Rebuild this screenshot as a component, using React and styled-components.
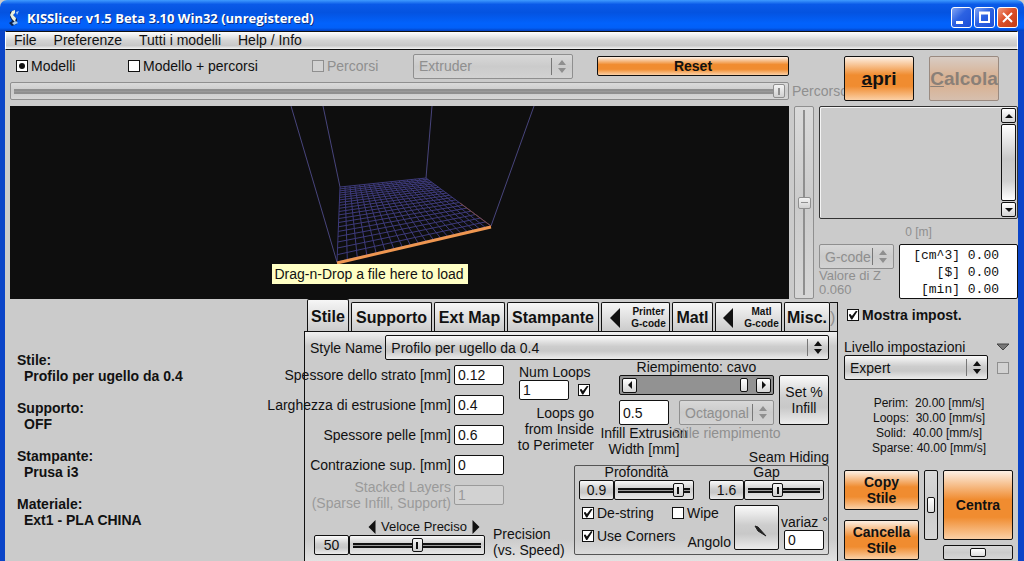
import React, { useState } from "react";
import styled, { createGlobalStyle, css } from "styled-components";

const GlobalStyle = createGlobalStyle`
  *, *::before, *::after {
    box-sizing: border-box;
  }
  body {
    margin: 0;
    background: #cbcbcb;
    color: #111;
    font-family: "Liberation Sans", Arial, sans-serif;
    font-size: 14px;
    line-height: 16px;
  }
  button, input, select {
    margin: 0;
    font-family: inherit;
    color: inherit;
  }
  h1, p, dl, dd, fieldset {
    margin: 0;
    padding: 0;
  }
`;

const gloss = "linear-gradient(#fafafa, #cdcdcd 45%, #c8c8c8 65%, #ececec)";
const orange = "linear-gradient(#fdf0e4, #f08c30 42%, #f08c30 68%, #fbd0a6)";

const Window = styled.div`
  min-height: 100vh;
  display: flex;
  flex-direction: column;
  overflow: hidden;
  background: #cbcbcb;
`;

const TitleBar = styled.header`
  height: 31px;
  display: flex;
  align-items: center;
  gap: 5px;
  padding: 4px 6px 0 7px;
  border-radius: 7px 7px 0 0;
  color: #fff;
  background: linear-gradient(#3f9bff, #0a5ae8 14%, #0453e0 40%, #0262fc 75%, #0260f8 90%, #0340c0);
`;

const Title = styled.h1`
  flex: 1;
  font: bold 13px/18px "Open Sans", "Noto Sans", sans-serif;
  text-shadow: 1px 1px 0 #0a2f86;
`;

const WindowButtons = styled.div`
  display: flex;
  gap: 2px;
`;

const WindowButton = styled.button`
  width: 21px;
  height: 21px;
  padding: 0;
  border: 1px solid #fff;
  border-radius: 3px;
  background: ${(p) =>
    p.$close
      ? "linear-gradient(135deg, #f09a80, #dc4f28 45%, #c23c14)"
      : "linear-gradient(135deg, #83a6f5, #2c62e2 45%, #1c4fd8)"};

  svg {
    display: block;
    margin: auto;
  }
`;

const Frame = styled.div`
  flex: 1;
  display: flex;
  flex-direction: column;
  border: solid #0a44c8;
  border-width: 0 6px 0 5px;
`;

const MenuBar = styled.nav`
  height: 19px;
  display: flex;
  gap: 17px;
  padding: 0 8px;
  border: 1px solid #111;
  border-right-color: #fff;
  border-left-color: #fff;
  background: linear-gradient(#fff, #d4d4d4 50%, #c8c8c8 80%, #f4f4f4);
`;

const MenuItem = styled.button`
  padding: 0;
  border: 0;
  background: none;
  font-size: 14px;
  line-height: 17px;
`;

const TopGrid = styled.section`
  display: grid;
  grid-template-columns: minmax(0, 1fr) 55px 174px;
  grid-template-rows: 32px 18px;
  padding-bottom: 6px;
`;

const Toolbar = styled.div`
  display: grid;
  grid-template-columns: 112px 184px 101px 160px 1fr;
  align-items: center;
  padding-left: 11px;
`;

const CheckLabel = styled.label`
  display: inline-flex;
  align-items: center;
  gap: 3px;
  white-space: nowrap;
  color: ${(p) => (p.$disabled ? "#8f8f8f" : "inherit")};
  font-weight: ${(p) => (p.$bold ? "bold" : "normal")};
`;

const Box = styled.input`
  appearance: none;
  flex: none;
  width: 12px;
  height: 12px;
  display: grid;
  place-items: center;
  border: 1px solid #111;
  background: #fff;

  &:disabled {
    border-color: #8f8f8f;
    background: #d2d2d2;
  }
  &:checked::before {
    content: "";
    background: #111;
    ${(p) =>
      p.type === "radio"
        ? css`
            width: 6px;
            height: 6px;
            border-radius: 3px;
          `
        : css`
            width: 9px;
            height: 9px;
            clip-path: polygon(0 45%, 22% 40%, 38% 62%, 85% 0, 100% 8%, 42% 100%, 30% 100%);
          `}
  }
`;

const SelectWrap = styled.div`
  position: relative;
  width: ${(p) => p.$width || "100%"};
  height: 25px;
  color: ${(p) => (p.$disabled ? "#8f8f8f" : "#111")};

  svg {
    position: absolute;
    right: 7px;
    top: 6px;
    pointer-events: none;
  }
  &::after {
    content: "";
    position: absolute;
    right: 21px;
    top: 4px;
    bottom: 4px;
    border-left: 1px solid #777;
  }
`;

const SelectField = styled.select`
  appearance: none;
  display: block;
  width: 100%;
  height: 100%;
  padding: 0 22px 0 5px;
  border: 1px solid currentColor;
  border-radius: 2px;
  background: ${gloss};
  font-size: 14px;
  opacity: 1;

  &:disabled {
    background: linear-gradient(#d8d8d8, #cbcbcb 50%, #d2d2d2);
  }
`;

const OrangeButton = styled.button`
  width: ${(p) => p.$width || "auto"};
  height: ${(p) => p.$height};
  padding: 0;
  border: 1px solid #111;
  border-radius: 2px;
  background: ${orange};
  font-size: ${(p) => p.$size || "14px"};
  font-weight: bold;
  line-height: 16px;
  white-space: nowrap;

  &:disabled {
    border-color: #9a8a80;
    color: #8a8078;
    background: linear-gradient(#d8ccc4, #d8b294 45%, #d8b294 65%, #d6bfae);
  }
`;

const ResetButton = styled(OrangeButton)`
  margin-left: 24px;
`;

const MainButtons = styled.div`
  grid-row: 1 / 3;
  grid-column: 3;
  display: flex;
  gap: 15px;
  padding-top: 6px;
`;

const PathLabel = styled.label`
  grid-row: 2;
  grid-column: 2;
  padding-left: 3px;
  white-space: nowrap;
  line-height: 18px;
  color: #8f8f8f;
`;

const thumb = css`
  appearance: none;
  box-sizing: border-box;
  width: ${(p) => p.$thumbW || 11}px;
  height: ${(p) => p.$thumbH || 14}px;
  border: 1px solid ${(p) => (p.disabled ? "#8f8f8f" : "#111")};
  border-radius: 2px;
  background: ${(p) =>
    p.$plain
      ? "linear-gradient(#fff, #ddd)"
      : `linear-gradient(currentColor, currentColor) center / ${
          p.$vertical ? "7px 1px" : "2px 7px"
        } no-repeat, linear-gradient(#f4f4f4, #d0d0d0)`};
`;

const Slider = styled.input`
  appearance: none;
  display: block;
  width: 100%;
  min-width: 0;
  height: 20px;
  padding: 0 3px;
  border: 1px solid currentColor;
  border-radius: 2px;
  color: ${(p) => (p.disabled ? "#8f8f8f" : "#111")};
  background: ${(p) =>
    p.$plain || p.disabled
      ? "linear-gradient(#dadada, #cbcbcb 50%, #d6d6d6)"
      : "linear-gradient(#f8f8f8, #cdcdcd 45%, #e6e6e6)"};

  ${(p) =>
    p.$vertical &&
    css`
      writing-mode: vertical-lr;
      direction: rtl;
      width: ${p.$width || "20px"};
      height: ${p.$height || "auto"};
      padding: 3px 0;
    `}

  &::-webkit-slider-runnable-track {
    ${(p) => (p.$vertical ? `width: ${p.$thumbW || 11}px;` : `height: ${p.$thumbH || 14}px;`)}
    background: ${(p) => {
      if (p.$plain) return "none";
      if (p.$vertical) return "linear-gradient(#8f8f8f, #8f8f8f) center / 2px 100% no-repeat";
      return "linear-gradient(currentColor 0 2px, #999 2px 3px, currentColor 3px 5px) center / 100% 5px no-repeat";
    }};
  }
  &::-webkit-slider-thumb {
    ${thumb}
  }
`;

const PathSlider = styled(Slider)`
  grid-row: 2;
  grid-column: 1;
  width: auto;
  height: 18px;
  margin-left: 5px;
`;

const ViewRow = styled.section`
  display: flex;
  height: 193px;
  padding-left: 5px;
`;

const Viewport = styled.div`
  position: relative;
  flex: 1;
  min-width: 0;
  overflow: hidden;
  background: #0e0e0e;

  svg {
    display: block;
    width: 100%;
    height: 193px;
  }
`;

const Hint = styled.div`
  position: absolute;
  top: 158px;
  left: calc(50% - 128px);
  height: 20px;
  padding: 0 4px 0 3px;
  line-height: 20px;
  white-space: nowrap;
  background: #ffffc4;
`;

const ZSliderBox = styled.div`
  display: flex;
  padding: 0 5px;
`;

const SidePanel = styled.div`
  width: 199px;
  display: flex;
  flex-direction: column;
`;

const Log = styled.div`
  height: 113px;
  display: flex;
  justify-content: flex-end;
  padding: 1px;
  border: 1px solid #333;
  border-radius: 2px;
  box-shadow: inset 1px 1px 0 #f4f4f4;
`;

const ScrollBar = styled.div`
  width: 15px;
  display: flex;
  flex-direction: column;
  gap: 1px;
`;

const ArrowButton = styled.button`
  flex: none;
  width: 15px;
  height: 15px;
  padding: 0;
  border: 1px solid #111;
  border-radius: 2px;
  background: linear-gradient(#fff, #d4d4d4);

  svg {
    display: block;
    margin: auto;
  }
`;

const ScrollThumb = styled.div`
  flex: 1;
  border: 1px solid #111;
  border-radius: 2px;
  background: linear-gradient(#fff, #c8c8c8 45%, #d0d0d0 75%, #fff);
`;

const Length = styled.p`
  padding-top: 4px;
  line-height: 18px;
  font-size: 12px;
  text-align: center;
  color: #8f8f8f;
`;

const SideBottom = styled.div`
  display: flex;
  justify-content: space-between;
  padding-top: 3px;
`;

const ZValue = styled.p`
  font-size: 13px;
  line-height: 14px;
  color: #8f8f8f;
  white-space: nowrap;
`;

const Estimate = styled.pre`
  width: 119px;
  height: 55px;
  margin: 0;
  padding: 2px 18px 0 0;
  border: 1px solid #111;
  border-radius: 2px;
  background: #fff;
  font: 13px/17px "Liberation Mono", monospace;
  text-align: right;
`;

const Lower = styled.main`
  flex: 1;
  display: flex;
`;

const Summary = styled.dl`
  flex: 1;
  min-width: 0;
  padding: 53px 0 0 12px;
  font-weight: bold;
`;

const SummaryItem = styled.div`
  margin-bottom: 16px;

  dd {
    padding-left: 7px;
  }
`;

const Notebook = styled.section`
  width: 534px;
  display: flex;
  flex-direction: column;
`;

const Tabs = styled.div`
  height: 32px;
  display: flex;
  align-items: flex-end;
  gap: 2px;
  padding-left: 3px;
`;

const Tab = styled.button`
  width: ${(p) => p.$width};
  height: ${(p) => (p.$active ? "32px" : "29px")};
  flex: none;
  display: flex;
  align-items: center;
  justify-content: center;
  gap: 6px;
  padding: 2px 0 0;
  border: 1px solid #111;
  border-bottom: 0;
  border-radius: 2px 2px 0 0;
  background: linear-gradient(#f6f6f6, #cbcbcb);
  font-size: ${(p) => (p.$small ? "10px" : "16px")};
  font-weight: bold;
  line-height: 12px;
  text-align: center;
  white-space: nowrap;
`;

const TabRest = styled.span`
  flex: 1;
  height: 29px;
  margin-left: -2px;
  border: solid #111;
  border-width: 1px 1px 0 0;
  line-height: 30px;
  font-size: 16px;
  color: #8f8f8f;
`;

const Panel = styled.div`
  flex: 1;
  padding: 3px 8px 5px 5px;
  border: solid #111;
  border-width: 1px 1px 0 1px;
  background: linear-gradient(#f0f0f0, #cbcbcb 14px, #cbcbcb calc(100% - 24px), #e4e4e4);
`;

const StyleRow = styled.div`
  display: flex;
  align-items: center;
  gap: 3px;
  white-space: nowrap;
`;

const PanelBody = styled.div`
  display: flex;
  gap: 13px;
  padding-top: 5px;
`;

const Fields = styled.div`
  width: 194px;
  display: flex;
  flex-direction: column;
  gap: 10px;
`;

// labels longer than the column run out to the left
const Field = styled.div`
  height: 20px;
  display: flex;
  align-items: center;
  justify-content: flex-end;
  gap: 3px;
  text-align: right;
  white-space: pre;
  color: ${(p) => (p.$disabled ? "#9a9a9a" : "inherit")};
`;

const TextInput = styled.input`
  flex: none;
  width: ${(p) => p.$width || "50px"};
  height: ${(p) => p.$height || "20px"};
  padding: 0 3px;
  border: 1px solid #111;
  border-radius: 2px;
  background: #fff;
  font-size: 14px;

  &:disabled {
    border-color: #9a9a9a;
    background: #d2d2d2;
  }
`;

const ValueButton = styled.button`
  flex: none;
  width: 35px;
  height: 20px;
  padding: 0;
  border: 1px solid #111;
  border-radius: 2px;
  background: ${gloss};
  font-size: 14px;
`;

const Precision = styled.div`
  width: 260px;
  display: flex;
  gap: 8px;
  padding: 4px 0 0 4px;
`;

const PrecisionControl = styled.div`
  width: 171px;
`;

const PrecisionScale = styled.div`
  display: flex;
  align-items: center;
  justify-content: flex-end;
  gap: 2px;
  padding-right: 2px;
  font-size: 13px;
`;

const PrecisionLabel = styled.label`
  padding-top: 7px;
  white-space: pre;
`;

const SliderRow = styled.div`
  display: flex;
`;

const RightSide = styled.div`
  flex: 1;
  display: flex;
  flex-direction: column;
`;

const InfillRow = styled.div`
  display: flex;
  justify-content: space-between;
`;

const Loops = styled.div`
  width: 77px;
  white-space: pre;
`;

const LoopsRow = styled.div`
  display: flex;
  align-items: center;
  gap: 9px;
  padding-left: 2px;
`;

const LoopsText = styled.p`
  padding-top: 5px;
  text-align: right;
`;

const LoopsLabel = styled.label`
  display: block;
  padding-left: 2px;
  line-height: 15px;
`;

const Infill = styled.div`
  width: 210px;
  display: grid;
  grid-template-columns: 155px 50px;
  column-gap: 5px;
`;

const InfillLabel = styled.label`
  grid-column: 1;
  margin-top: -6px;
  text-align: center;
`;

const InfillBar = styled.div`
  grid-column: 1;
  height: 20px;
  display: flex;
  align-items: center;
  padding: 0 2px;
  border: 1px solid #111;
  border-radius: 2px;
  background: #929292;

  input {
    height: 14px;
    padding: 0 8px 0 0;
    border: 0;
    background: none;
  }
`;

const InfillButton = styled.button`
  grid-column: 2;
  grid-row: 2 / 4;
  height: 50px;
  padding: 0;
  border: 1px solid #111;
  border-radius: 2px;
  background: ${gloss};
  font-size: 14px;
  line-height: 16px;
`;

const InfillInputs = styled.div`
  display: flex;
  justify-content: space-between;
  padding-top: 5px;
`;

const Stack = styled.div`
  width: ${(p) => p.$width};
  display: flex;
  flex-direction: column;
  align-items: center;
  text-align: center;
  white-space: pre;
  color: ${(p) => (p.$disabled ? "#8f8f8f" : "inherit")};
`;

const SeamTitle = styled.p`
  margin-top: -8px;
  text-align: right;
`;

const Seam = styled.div`
  align-self: flex-end;
  width: 255px;
  height: 90px;
  border: 1px solid #555;
  border-radius: 2px;
`;

const SeamSliders = styled.div`
  display: flex;
  justify-content: space-between;
  padding: 0 4px;
  margin-top: -2px;
`;

const SeamSlider = styled.div`
  width: 115px;

  label {
    display: block;
    text-align: center;
  }
`;

const SeamBottom = styled.div`
  display: flex;
  padding: 5px 4px 0 7px;
`;

const SeamChecks = styled.div`
  flex: 1;
  display: grid;
  grid-template-columns: 90px 1fr;
  grid-template-rows: 16px 1fr;
`;

const AngleLabel = styled.span`
  align-self: end;
  padding-right: 3px;
  text-align: right;
`;

const Dial = styled.button`
  width: 45px;
  height: 45px;
  padding: 0;
  border: 1px solid #111;
  border-radius: 2px;
  background: ${gloss};

  svg {
    display: block;
    margin: auto;
  }
`;

const Variation = styled.div`
  width: 45px;
  padding: 9px 0 0 5px;
  white-space: nowrap;

  label {
    display: block;
    margin-left: -3px;
  }
`;

const Settings = styled.aside`
  width: 180px;
  padding: 8px 4px 0 6px;
  display: flex;
  flex-direction: column;
`;

const SettingsCheck = styled(CheckLabel)`
  padding-left: 3px;
`;

const LevelRow = styled.div`
  display: flex;
  align-items: center;
  justify-content: space-between;
  padding-right: 4px;

  &:first-of-type {
    padding-top: 16px;
  }
`;

const LevelBox = styled(Box)`
  margin-right: 1px;
`;

const Speeds = styled.div`
  padding: 16px 0 14px;
  font-size: 12px;
  line-height: 15px;
  text-align: center;
  white-space: pre;
`;

const Actions = styled.div`
  display: grid;
  grid-template-columns: 75px 14px 70px;
  grid-template-rows: 70px 15px;
  gap: 5px;
`;

const ActionStack = styled.div`
  grid-row: 1 / 3;
  display: flex;
  flex-direction: column;
  gap: 10px;
`;

const PanSlider = styled(Slider)`
  grid-column: 3;
  height: 15px;
`;

const Spinner = () => (
  <svg width="8" height="13" viewBox="0 0 8 13" fill="currentColor">
    <path d="M4 0 8 5H0Z M0 8H8L4 13Z" />
  </svg>
);

const arrows = {
  up: "M4 2 8 6H0Z",
  down: "M0 2H8L4 6Z",
  left: "M6 0V8L2 4Z",
  right: "M2 0 6 4 2 8Z",
};

const Arrow = ({ dir, size = 8 }) => (
  <svg width={size} height={size} viewBox="0 0 8 8" fill="currentColor">
    <path d={arrows[dir]} />
  </svg>
);

const Select = ({ id, value, width, disabled, label }) => (
  <SelectWrap $width={width} $disabled={disabled}>
    <SelectField id={id} aria-label={label} defaultValue={value} disabled={disabled}>
      <option>{value}</option>
    </SelectField>
    <Spinner />
  </SelectWrap>
);

// perspective map of the unit square on the bed corners
const front = [327, 156];
const right = [481, 120];
const backRight = [416, 72];
const backLeft = [330, 81];

const project = (u, v) => {
  const [x0, y0] = front;
  const [x1, y1] = right;
  const [x2, y2] = backRight;
  const [x3, y3] = backLeft;
  const dx1 = x1 - x2;
  const dx2 = x3 - x2;
  const dy1 = y1 - y2;
  const dy2 = y3 - y2;
  const sx = x0 - x1 + x2 - x3;
  const sy = y0 - y1 + y2 - y3;
  const det = dx1 * dy2 - dx2 * dy1;
  const g = (sx * dy2 - dx2 * sy) / det;
  const h = (dx1 * sy - sx * dy1) / det;
  const w = g * u + h * v + 1;
  return [
    ((x1 - x0 + g * x1) * u + (x3 - x0 + h * x3) * v + x0) / w,
    ((y1 - y0 + g * y1) * u + (y3 - y0 + h * y3) * v + y0) / w,
  ];
};

const gridPath = Array.from({ length: 21 }, (_, i) => {
  const t = i / 20;
  return `M${project(t, 0)}L${project(t, 1)}M${project(0, t)}L${project(1, t)}`;
}).join("");

const Bed = () => (
  <svg viewBox="0 0 779 193" fill="none">
    <path d={gridPath} stroke="#3d3a7a" strokeWidth="1" />
    <path
      d="M281 0 327 156 M313 0 330 81 M422 0 416 72 M524 0 481 120"
      stroke="#48457c"
      strokeWidth="1"
    />
    <path d="M450 97 481 120" stroke="#7a4a48" strokeWidth="1" />
    <path d="M327 157 481 121" stroke="#ee9650" strokeWidth="3" />
  </svg>
);

const Logo = () => (
  <svg width="15" height="18" viewBox="0 0 15 18">
    <path d="M3 3 8 1 6 6 10 10 10 15 5 17 2 14 5 12 3 8Z" fill="#0b2250" />
    <path d="M5 2 8 1 8 4 6 6 9 9 8 13 5 10 3 6Z" fill="#e8f0dc" />
    <path d="M9 3 12 2 10 6Z M5 14 9 12 11 14 7 16Z" fill="#a9cdf2" />
  </svg>
);

const fields = [
  { id: "strato", label: "Spessore dello strato [mm]", value: "0.12" },
  { id: "estrusione", label: "Larghezza di estrusione [mm]", value: "0.4" },
  { id: "pelle", label: "Spessore pelle [mm]", value: "0.6" },
  { id: "contrazione", label: "Contrazione sup. [mm]", value: "0" },
  { id: "stacked", label: "Stacked Layers\n(Sparse Infill, Support)", value: "1", disabled: true },
];

const summary = [
  ["Stile:", "Profilo per ugello da 0.4"],
  ["Supporto:", "OFF"],
  ["Stampante:", "Prusa i3"],
  ["Materiale:", "Ext1 - PLA CHINA"],
];

const tabs = [
  { name: "Stile", width: "42px" },
  { name: "Supporto", width: "81px" },
  { name: "Ext Map", width: "71px" },
  { name: "Stampante", width: "92px" },
  { name: "Printer", width: "69px", gcode: true },
  { name: "Matl", width: "41px" },
  { name: "Matl", width: "67px", gcode: true },
  { name: "Misc.", width: "46px" },
];

const App = () => {
  const [tab, setTab] = useState(0);
  const [view, setView] = useState("modelli");

  return (
    <Window>
      <GlobalStyle />
      <TitleBar>
        <Logo />
        <Title>KISSlicer v1.5 Beta 3.10 Win32 (unregistered)</Title>
        <WindowButtons>
          <WindowButton aria-label="Minimize">
            <svg width="19" height="19">
              <path d="M4 13H11V16H4Z" fill="#fff" />
            </svg>
          </WindowButton>
          <WindowButton aria-label="Maximize">
            <svg width="19" height="19" fill="none" stroke="#fff">
              <path d="M5 5V14H14V5" strokeWidth="2" />
              <path d="M4 5H15" strokeWidth="3" />
            </svg>
          </WindowButton>
          <WindowButton $close aria-label="Close">
            <svg width="19" height="19" stroke="#fff" strokeWidth="2">
              <path d="M5 5 14 14 M14 5 5 14" />
            </svg>
          </WindowButton>
        </WindowButtons>
      </TitleBar>

      <Frame>
        <MenuBar>
          <MenuItem>File</MenuItem>
          <MenuItem>Preferenze</MenuItem>
          <MenuItem>Tutti i modelli</MenuItem>
          <MenuItem>Help / Info</MenuItem>
        </MenuBar>

        <TopGrid>
          <Toolbar>
            <CheckLabel>
              <Box
                type="radio"
                name="view"
                checked={view === "modelli"}
                onChange={() => setView("modelli")}
              />
              Modelli
            </CheckLabel>
            <CheckLabel>
              <Box
                type="radio"
                name="view"
                checked={view === "entrambi"}
                onChange={() => setView("entrambi")}
              />
              Modello + percorsi
            </CheckLabel>
            <CheckLabel $disabled>
              <Box type="radio" name="view" disabled />
              Percorsi
            </CheckLabel>
            <Select value="Extruder" label="Extruder" disabled />
            <ResetButton $height="20px">Reset</ResetButton>
          </Toolbar>
          <PathSlider id="percorso" type="range" defaultValue={100} $thumbW={12} disabled />
          <PathLabel htmlFor="percorso">Percorso</PathLabel>
          <MainButtons>
            <OrangeButton $width="70px" $height="45px" $size="19px">
              <u>a</u>pri
            </OrangeButton>
            <OrangeButton $width="70px" $height="45px" $size="19px" disabled>
              <u>C</u>alcola
            </OrangeButton>
          </MainButtons>
        </TopGrid>

        <ViewRow>
          <Viewport>
            <Bed />
            <Hint>Drag-n-Drop a file here to load</Hint>
          </Viewport>
          <ZSliderBox>
            <Slider
              type="range"
              aria-label="Z"
              defaultValue={50}
              $vertical
              $thumbW={13}
              $thumbH={12}
              disabled
            />
          </ZSliderBox>
          <SidePanel>
            <Log>
              <ScrollBar>
                <ArrowButton aria-label="Su">
                  <Arrow dir="up" />
                </ArrowButton>
                <ScrollThumb />
                <ArrowButton aria-label="Giù">
                  <Arrow dir="down" />
                </ArrowButton>
              </ScrollBar>
            </Log>
            <Length>0 [m]</Length>
            <SideBottom>
              <div>
                <Select value="G-code" label="G-code" width="75px" disabled />
                <ZValue>Valore di Z</ZValue>
                <ZValue>0.060</ZValue>
              </div>
              <Estimate>{"[cm^3] 0.00\n[$] 0.00\n[min] 0.00"}</Estimate>
            </SideBottom>
          </SidePanel>
        </ViewRow>

        <Lower>
          <Summary>
            {summary.map(([name, value]) => (
              <SummaryItem key={name}>
                <dt>{name}</dt>
                <dd>{value}</dd>
              </SummaryItem>
            ))}
          </Summary>

          <Notebook>
            <Tabs>
              {tabs.map((t, i) => (
                <Tab
                  key={i}
                  $width={t.width}
                  $active={tab === i}
                  $small={t.gcode}
                  onClick={() => setTab(i)}
                >
                  {t.gcode && <Arrow dir="left" size={20} />}
                  {t.gcode ? (
                    <span>
                      {t.name}
                      <br />
                      G-code
                    </span>
                  ) : (
                    t.name
                  )}
                </Tab>
              ))}
              <TabRest>)</TabRest>
            </Tabs>

            <Panel>
              <StyleRow>
                <label htmlFor="style">Style Name</label>
                <Select id="style" value="Profilo per ugello da 0.4" />
              </StyleRow>

              <PanelBody>
                <Fields>
                  {fields.map((f) => (
                    <Field key={f.id} $disabled={f.disabled}>
                      <label htmlFor={f.id}>{f.label}</label>
                      <TextInput id={f.id} defaultValue={f.value} disabled={f.disabled} />
                    </Field>
                  ))}
                  <Precision>
                    <PrecisionControl>
                      <PrecisionScale>
                        <Arrow dir="left" size={14} />
                        Veloce Preciso
                        <Arrow dir="right" size={14} />
                      </PrecisionScale>
                      <SliderRow>
                        <ValueButton>50</ValueButton>
                        <Slider id="precision" type="range" defaultValue={50} />
                      </SliderRow>
                    </PrecisionControl>
                    <PrecisionLabel htmlFor="precision">{"Precision\n(vs. Speed)"}</PrecisionLabel>
                  </Precision>
                </Fields>

                <RightSide>
                  <InfillRow>
                    <Loops>
                      <LoopsLabel htmlFor="loops">Num Loops</LoopsLabel>
                      <LoopsRow>
                        <TextInput id="loops" defaultValue="1" />
                        <Box type="checkbox" aria-label="Loops go from Inside to Perimeter" defaultChecked />
                      </LoopsRow>
                      <LoopsText>{"Loops go\nfrom Inside\nto Perimeter"}</LoopsText>
                    </Loops>
                    <Infill>
                      <InfillLabel htmlFor="infill">Riempimento: cavo</InfillLabel>
                      <InfillBar>
                        <ArrowButton aria-label="Meno">
                          <Arrow dir="left" />
                        </ArrowButton>
                        <Slider id="infill" type="range" defaultValue={100} $plain $thumbW={8} />
                        <ArrowButton aria-label="Più">
                          <Arrow dir="right" />
                        </ArrowButton>
                      </InfillBar>
                      <InfillButton>
                        Set %<br />
                        Infill
                      </InfillButton>
                      <InfillInputs>
                        <Stack $width="50px">
                          <TextInput id="infillWidth" defaultValue="0.5" $height="25px" />
                          <label htmlFor="infillWidth">{"Infill Extrusion\nWidth [mm]"}</label>
                        </Stack>
                        <Stack $width="95px" $disabled>
                          <Select id="infillStyle" value="Octagonal" disabled />
                          <label htmlFor="infillStyle">Stile riempimento</label>
                        </Stack>
                      </InfillInputs>
                    </Infill>
                  </InfillRow>

                  <SeamTitle>Seam Hiding</SeamTitle>
                  <Seam>
                    <SeamSliders>
                      <SeamSlider>
                        <label htmlFor="depth">Profondità</label>
                        <SliderRow>
                          <ValueButton>0.9</ValueButton>
                          <Slider id="depth" type="range" defaultValue={90} />
                        </SliderRow>
                      </SeamSlider>
                      <SeamSlider>
                        <label htmlFor="gap">Gap</label>
                        <SliderRow>
                          <ValueButton>1.6</ValueButton>
                          <Slider id="gap" type="range" defaultValue={40} />
                        </SliderRow>
                      </SeamSlider>
                    </SeamSliders>
                    <SeamBottom>
                      <SeamChecks>
                        <CheckLabel>
                          <Box type="checkbox" defaultChecked />
                          De-string
                        </CheckLabel>
                        <CheckLabel>
                          <Box type="checkbox" />
                          Wipe
                        </CheckLabel>
                        <CheckLabel>
                          <Box type="checkbox" defaultChecked />
                          Use Corners
                        </CheckLabel>
                        <AngleLabel>Angolo</AngleLabel>
                      </SeamChecks>
                      <Dial aria-label="Angolo">
                        <svg width="43" height="43">
                          <path d="M20 20 23 21 31 30 23 25Z" fill="#222" stroke="#222" />
                        </svg>
                      </Dial>
                      <Variation>
                        <label htmlFor="variaz">variaz °</label>
                        <TextInput id="variaz" defaultValue="0" $width="40px" />
                      </Variation>
                    </SeamBottom>
                  </Seam>
                </RightSide>
              </PanelBody>
            </Panel>
          </Notebook>

          <Settings>
            <SettingsCheck $bold>
              <Box type="checkbox" defaultChecked />
              Mostra impost.
            </SettingsCheck>
            <LevelRow>
              <label htmlFor="level">Livello impostazioni</label>
              <svg width="14" height="8">
                <path d="M1 1H13L7 7Z" fill="#777" stroke="#444" />
              </svg>
            </LevelRow>
            <LevelRow>
              <Select id="level" value="Expert" width="144px" />
              <LevelBox type="checkbox" aria-label="Blocca livello" disabled />
            </LevelRow>
            <Speeds>
              {"Perim:  20.00 [mm/s]\nLoops:  30.00 [mm/s]\nSolid:  40.00 [mm/s]\nSparse: 40.00 [mm/s]"}
            </Speeds>
            <Actions>
              <ActionStack>
                <OrangeButton $height="40px">
                  Copy
                  <br />
                  Stile
                </OrangeButton>
                <OrangeButton $height="40px">
                  Cancella
                  <br />
                  Stile
                </OrangeButton>
              </ActionStack>
              <Slider
                type="range"
                aria-label="Sposta Y"
                defaultValue={50}
                $vertical
                $plain
                $width="14px"
                $height="70px"
                $thumbW={8}
                $thumbH={16}
              />
              <OrangeButton $height="70px">Centra</OrangeButton>
              <PanSlider
                type="range"
                aria-label="Sposta X"
                defaultValue={50}
                $plain
                $thumbW={16}
                $thumbH={9}
              />
            </Actions>
          </Settings>
        </Lower>
      </Frame>
    </Window>
  );
};

export default App;
